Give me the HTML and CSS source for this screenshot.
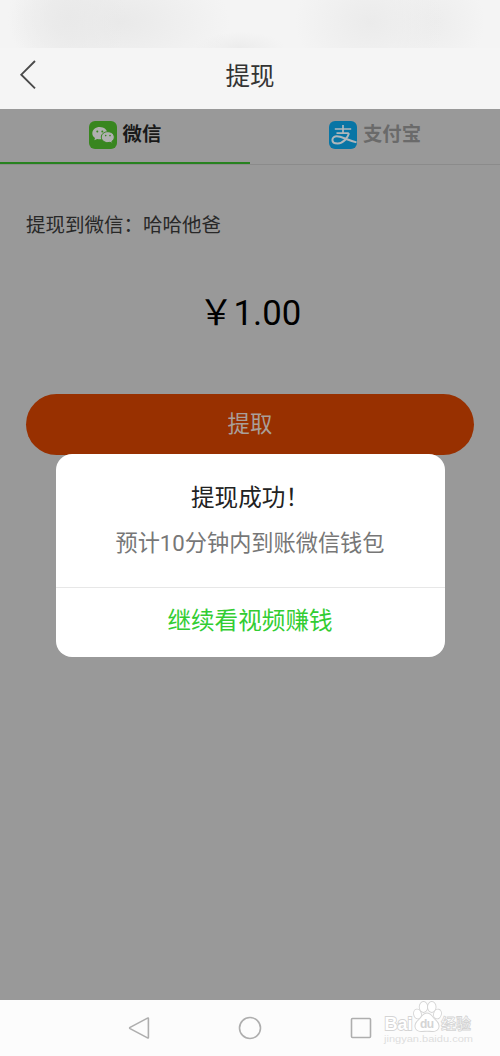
FILE: index.html
```html
<!DOCTYPE html>
<html lang="zh-CN">
<head>
<meta charset="utf-8">
<meta name="viewport" content="width=device-width, initial-scale=1">
<title>提现</title>
<link rel="stylesheet" href="styles.css">
</head>
<body>
<div class="phone">
  <div class="status"></div>
  <header class="header">
    <svg class="back" width="20" height="32" viewBox="0 0 20 32"><path d="M17 0 3.300 13.700l13.700 13.700"/></svg>
    <h1 class="title">提现</h1>
  </header>
  <main class="page">
    <nav class="tabs">
      <div class="tab active">
        <svg class="tab-icon" viewBox="0 0 28 28">
          <rect width="28" height="28" rx="6" fill="#38861f"/>
          <path fill="#b0b0b0" d="M10.800 6C6.600 6 3.300 8.700 3.300 12.200c0 2 1 3.600 2.700 4.800L5.400 19.200l2.700-1.300c1 .3 1.900.4 2.900.4 4.100 0 7.300-2.700 7.300-6.100S15 6 10.800 6z"/>
          <path fill="#b0b0b0" stroke="#38861f" stroke-width="1" d="M18.800 10.700c-3.700 0-6.500 2.400-6.500 5.400s2.800 5.500 6.500 5.500c.8 0 1.500-.1 2.200-.3l2.400 1.200-.6-2c1.500-1.100 2.500-2.600 2.500-4.400 0-3-2.900-5.400-6.500-5.400z"/>
          <g fill="#38861f"><circle cx="8.300" cy="10.500" r="1"/><circle cx="13.300" cy="10.500" r="1"/><circle cx="16.700" cy="14.600" r=".8"/><circle cx="21" cy="14.600" r=".8"/></g>
        </svg>
        <span>微信</span>
      </div>
      <div class="tab">
        <svg class="tab-icon" viewBox="0 0 28 28">
          <rect width="28" height="28" rx="6" fill="#0875a5"/>
          <g fill="none" stroke="#b0b7bb" stroke-width="1.700">
            <path d="M5.800 8h16.400M14 4v8M7.500 12.200h12.300"/>
            <path d="M20 12.200c-1.400 4.700-5.500 10.200-11.300 10.200-3 0-5.300-1.200-5.300-3.500 0-2.100 2-3.600 4.500-3.600 4.400 0 9 3.300 19.600 6.100" stroke-width="2"/>
          </g>
        </svg>
        <span>支付宝</span>
      </div>
    </nav>
    <p class="account">提现到微信：哈哈他爸</p>
    <p class="amount">￥1.00</p>
    <div class="submit">提取</div>
  </main>
  <section class="dialog">
    <div class="message">
      <h2 class="dialog-title">提现成功！</h2>
      <p class="detail">预计10分钟内到账微信钱包</p>
    </div>
    <div class="continue">继续看视频赚钱</div>
  </section>
  <footer class="navbar">
    <svg class="nav-icon" viewBox="0 0 24 24"><path d="M21.400 2.600v18.800q0 1-.9.500L3.100 12.600q-1-.6 0-1.200L20.500 2.100q.9-.5.900.5z"/></svg>
    <svg class="nav-icon" viewBox="0 0 24 24"><circle cx="12" cy="12" r="10.500"/></svg>
    <svg class="nav-icon" viewBox="0 0 24 24"><rect x="2.500" y="2.500" width="19" height="19" rx="1"/></svg>
    <svg class="watermark" width="100" height="50" viewBox="0 0 100 50">
      <g class="paw">
        <ellipse cx="37.500" cy="17" rx="3.400" ry="4.500" transform="rotate(-12 37.500 17)"/>
        <ellipse cx="43.500" cy="10" rx="3.800" ry="5"/>
        <ellipse cx="51.800" cy="10" rx="3.800" ry="5"/>
        <ellipse cx="57.500" cy="17" rx="3.400" ry="4.500" transform="rotate(15 57.500 17)"/>
        <path d="M47 16.500c-4 0-5 4-8 6.500-6 5-4 11.500 3 11 3-.3 7-.3 10 0 7 .5 9-6 3-11-3-2.500-4-6.500-8-6.500z"/>
      </g>
      <text class="brand" x="4.500" y="33" textLength="28" lengthAdjust="spacingAndGlyphs">Bai</text>
      <text class="du" x="40" y="31" textLength="14">du</text>
      <text class="cn" x="61" y="32" textLength="30">经验</text>
      <text class="domain" x="4" y="45" textLength="89" lengthAdjust="spacingAndGlyphs">jingyan.baidu.com</text>
    </svg>
  </footer>
</div>
</body>
</html>
```
FILE: styles.css
```css
* { box-sizing: border-box; }
body {
  margin: 0;
  font-family: Roboto, "Noto Sans CJK SC", sans-serif;
}
h1, h2, p { margin: 0; font-weight: 400; }
.phone {
  position: relative;
  display: flex;
  flex-direction: column;
  width: 500px;
  height: 1056px;
  overflow: hidden;
  background: #999;
}
.status {
  height: 48px;
  background:
    radial-gradient(ellipse 60px 60px at 68px 18px, #e9e9e9, transparent),
    radial-gradient(ellipse 110px 60px at 120px 22px, #e9e9e9, transparent),
    radial-gradient(ellipse 75px 60px at 370px 22px, #ebebeb, transparent),
    radial-gradient(ellipse 50px 50px at 435px 22px, #ededed, transparent),
    radial-gradient(ellipse 45px 16px at 240px 48px, #ececec, transparent),
    #f4f4f4;
}
.header {
  display: flex;
  align-items: center;
  height: 61px;
  padding: 0 18px 4px;
  background: #f5f5f5;
}
.back { fill: none; stroke: #4a4a4a; stroke-width: 1.9; overflow: visible; }
.title {
  flex: 1;
  padding-right: 20px;
  font-size: 24.5px;
  line-height: 36px;
  text-align: center;
  color: #333;
}
.page { flex: 1; background: #999; }
.tabs {
  display: flex;
  height: 56px;
  border-bottom: 1px solid #8b8b8b;
}
.tab {
  display: flex;
  flex: 1;
  justify-content: center;
  align-items: center;
  gap: 6px;
  height: 55px;
  padding-bottom: 3px;
  font-size: 19.4px;
  font-weight: 700;
  line-height: 28px;
  color: #6a6a6a;
}
.tab.active {
  color: #191919;
  padding-bottom: 1px;
  border-bottom: 2px solid #27821f;
}
.tab-icon { width: 28px; height: 28px; }
.account {
  padding: 46px 26px 0;
  font-size: 19.5px;
  line-height: 30px;
  color: #282828;
}
.amount {
  padding-top: 49px;
  font-size: 34.7px;
  line-height: 46px;
  text-align: center;
  color: #000;
}
.submit {
  height: 61px;
  margin: 58px 26px 0;
  border-radius: 31px;
  background: #983000;
  font-size: 22.4px;
  line-height: 61px;
  text-align: center;
  color: #a99f9a;
}
.dialog {
  position: absolute;
  left: 55.5px;
  top: 454px;
  width: 389px;
  height: 202.5px;
  border-radius: 16px;
  background: #fff;
  text-align: center;
}
.message {
  height: 134px;
  padding-top: 26px;
  border-bottom: 1px solid #e7e7e7;
}
.dialog-title {
  font-size: 23.6px;
  line-height: 36px;
  color: #222;
}
.detail {
  padding-top: 9px;
  font-size: 22.2px;
  line-height: 36px;
  color: #777;
}
.continue {
  font-size: 23.6px;
  line-height: 67px;
  color: #32cd32;
}
.navbar {
  position: relative;
  display: flex;
  justify-content: center;
  gap: 87px;
  height: 56px;
  padding-top: 16px;
  background: #fcfcfc;
}
.nav-icon {
  width: 24px;
  height: 24px;
  fill: none;
  stroke: #aeaeae;
  stroke-width: 1.6;
}
.watermark { position: absolute; left: 380px; top: -3px; }
.watermark text { font-family: "Liberation Sans", "Noto Sans CJK SC", sans-serif; }
.paw, .brand { fill: #fff; stroke: #d4d4d4; stroke-width: 1.8; paint-order: stroke; }
.watermark .du { font-size: 12px; font-weight: 700; fill: #d4d4d4; }
.cn { font-size: 15px; font-weight: 700; fill: #fff; stroke: #d4d4d4; stroke-width: .8; }
.brand { font-size: 19px; font-weight: 700; }
.watermark .domain {
  font-family: "Liberation Sans", sans-serif;
  font-size: 9px;
  fill: #dedede;
}
```
